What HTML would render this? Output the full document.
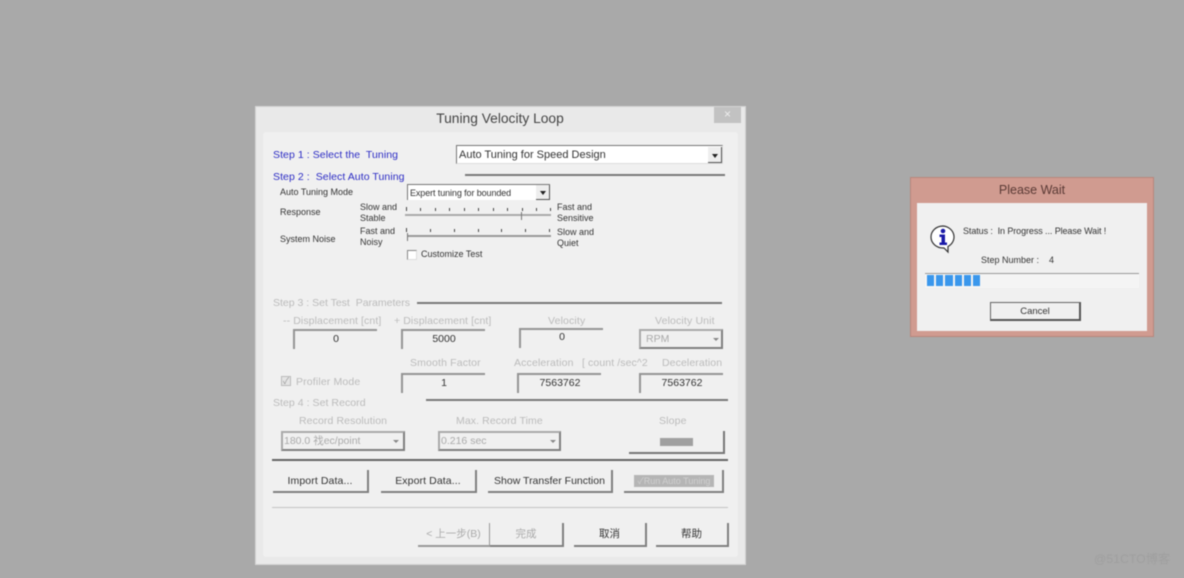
<!DOCTYPE html>
<html><head><meta charset="utf-8">
<style>
html,body{margin:0;padding:0;width:1184px;height:578px;overflow:hidden;background:#a9a9a9}
body{position:relative;font-family:"Liberation Sans","Noto Sans CJK SC",sans-serif;color:#333}
div{position:absolute;box-sizing:border-box;white-space:nowrap}
#w{left:0;top:0;width:1184px;height:578px;filter:blur(.4px)}
.t{font-size:9px;line-height:11px;color:#333;letter-spacing:0}
.d{font-size:10.5px;line-height:12px;color:#bbb;letter-spacing:.15px}
.b{font-size:10.5px;line-height:14px;color:#2b2bc4;letter-spacing:.07px}
.l{background:#7a7a7a;height:2px}
.in{border-top:2px solid #949494;border-left:2px solid #949494;font-size:10.5px;color:#333;text-align:center;line-height:24px}
.dd{border:2px solid #aaa;border-right-color:#808080;border-bottom-color:#808080;background:#f0f0f0;font-size:10.5px;color:#aaa;padding-left:1px}
.ar{width:0;height:0;border-left:3px solid transparent;border-right:3px solid transparent;border-top:3px solid #888}
.btn{border-right:2px solid #808080;border-bottom:2px solid #808080;font-size:10.5px;color:#333;text-align:center;letter-spacing:0;background:#f0f0f0}
.tk{width:1px;height:4px;background:#444}
</style></head><body>
<div id="w">

<!-- main dialog -->
<div style="left:255px;top:106px;width:491px;height:459px;background:#e9e9e9;border:1px solid #d4d4d4"></div>
<div style="left:263px;top:132px;width:475px;height:425px;background:#f0f0f0;border-radius:3px"></div>
<div style="left:255px;top:110px;width:490px;text-align:center;font-size:13.8px;line-height:18px;color:#444">Tuning Velocity Loop</div>
<div style="left:714px;top:107px;width:27px;height:16px;background:#c2c2c2;color:#eee;font-size:12px;line-height:15px;text-align:center">×</div>

<div class="b" style="left:273px;top:148px">Step 1 : Select the&nbsp; Tuning</div>
<div class="b" style="left:273px;top:170px">Step 2 :&nbsp; Select Auto Tuning</div>
<div style="left:456px;top:145px;width:267px;height:19px;background:#fff;border:1px solid #777;border-right-color:#ddd;border-bottom-color:#ddd;font-size:11px;line-height:18px;padding-left:2px;color:#333">Auto Tuning for Speed Design</div>
<div style="left:708px;top:147px;width:14px;height:16px;background:#eee;border-right:1px solid #555;border-bottom:1px solid #555"></div>
<div class="ar" style="left:712px;top:154px;border-top-color:#222;border-top-width:4px"></div>
<div class="l" style="left:465px;top:174px;width:260px"></div>

<div class="t" style="left:280px;top:187px">Auto Tuning Mode</div>
<div style="left:407px;top:184px;width:143px;height:16px;background:#fff;border-left:1px solid #777;border-top:1px solid #777;font-size:9px;line-height:16px;padding-left:2px;color:#333;letter-spacing:-.1px">Expert tuning for bounded</div>
<div style="left:536px;top:185px;width:14px;height:15px;background:#eee;border-right:1px solid #555;border-bottom:1px solid #555"></div>
<div class="ar" style="left:540px;top:191px;border-top-color:#222;border-top-width:4px"></div>

<div class="t" style="left:280px;top:207px">Response</div>
<div class="t" style="left:360px;top:202px">Slow and<br>Stable</div>
<div class="t" style="left:557px;top:202px">Fast and<br>Sensitive</div>
<div style="left:405px;top:214px;width:146px;height:2px;background:#aaa"></div>
<div style="left:521px;top:212px;width:1px;height:8px;background:#777"></div>
<div class="tk" style="left:406px;top:207px"></div><div class="tk" style="left:420px;top:208px;height:3px"></div><div class="tk" style="left:435px;top:208px;height:3px"></div><div class="tk" style="left:449px;top:208px;height:3px"></div><div class="tk" style="left:464px;top:208px;height:3px"></div><div class="tk" style="left:478px;top:208px;height:3px"></div><div class="tk" style="left:493px;top:208px;height:3px"></div><div class="tk" style="left:507px;top:208px;height:3px"></div><div class="tk" style="left:522px;top:208px;height:3px"></div><div class="tk" style="left:536px;top:208px;height:3px"></div><div class="tk" style="left:550px;top:208px;height:3px"></div>

<div class="t" style="left:280px;top:234px">System Noise</div>
<div class="t" style="left:360px;top:226px">Fast and<br>Noisy</div>
<div class="t" style="left:557px;top:227px">Slow and<br>Quiet</div>
<div style="left:407px;top:235px;width:144px;height:2px;background:#999"></div>
<div style="left:407px;top:233px;width:1px;height:8px;background:#777"></div>
<div class="tk" style="left:406px;top:228px"></div><div class="tk" style="left:430px;top:229px;height:3px"></div><div class="tk" style="left:454px;top:229px;height:3px"></div><div class="tk" style="left:478px;top:229px;height:3px"></div><div class="tk" style="left:501px;top:229px;height:3px"></div><div class="tk" style="left:525px;top:229px;height:3px"></div><div class="tk" style="left:549px;top:229px;height:3px"></div>

<div style="left:407px;top:250px;width:10px;height:10px;background:#fff;border:1px solid #888;border-right-color:#ddd;border-bottom-color:#ddd"></div>
<div class="t" style="left:421px;top:249px">Customize Test</div>

<!-- step 3 -->
<div class="d" style="left:273px;top:297px;letter-spacing:0">Step 3 : Set Test&nbsp; Parameters</div>
<div class="l" style="left:417px;top:302px;width:305px"></div>
<div class="d" style="left:283px;top:315px;letter-spacing:.1px">-- Displacement [cnt]</div>
<div class="d" style="left:394px;top:315px;letter-spacing:.1px">+ Displacement [cnt]</div>
<div class="d" style="left:548px;top:315px">Velocity</div>
<div class="d" style="left:655px;top:315px">Velocity Unit</div>
<div class="in" style="left:293px;top:329px;width:84px;height:20px;line-height:17px">0</div>
<div class="in" style="left:401px;top:329px;width:84px;height:20px;line-height:17px">5000</div>
<div class="in" style="left:519px;top:328px;width:84px;height:20px;line-height:15px">0</div>
<div class="dd" style="left:639px;top:329px;width:84px;height:20px;line-height:17px;padding-left:5px">RPM</div>
<div class="ar" style="left:713px;top:338px"></div>

<div class="d" style="left:410px;top:357px">Smooth Factor</div>
<div class="d" style="left:514px;top:357px">Acceleration</div>
<div class="d" style="left:582px;top:357px;letter-spacing:.1px">[ count /sec^2</div>
<div class="d" style="left:662px;top:357px;letter-spacing:.1px">Deceleration</div>
<div style="left:281px;top:376px;width:10px;height:10px;background:#e4e4e4;border:1px solid #bbb;color:#999;font-size:9px;line-height:8px;text-align:center">✓</div>
<div class="d" style="left:296px;top:376px">Profiler Mode</div>
<div class="in" style="left:401px;top:373px;width:84px;height:20px;line-height:16px">1</div>
<div class="in" style="left:517px;top:373px;width:84px;height:20px;line-height:16px">7563762</div>
<div class="in" style="left:639px;top:373px;width:84px;height:20px;line-height:16px">7563762</div>

<!-- step 4 -->
<div class="d" style="left:273px;top:397px;letter-spacing:.05px">Step 4 : Set Record</div>
<div class="l" style="left:426px;top:399px;width:302px"></div>
<div class="d" style="left:299px;top:415px;letter-spacing:.1px">Record Resolution</div>
<div class="d" style="left:456px;top:415px;letter-spacing:.1px">Max. Record Time</div>
<div class="d" style="left:659px;top:415px">Slope</div>
<div class="dd" style="left:281px;top:431px;width:124px;height:20px;line-height:16px">180.0 䄀ec/point</div>
<div class="ar" style="left:393px;top:440px"></div>
<div class="dd" style="left:438px;top:431px;width:123px;height:20px;line-height:16px">0.216 sec</div>
<div class="ar" style="left:550px;top:440px"></div>
<div style="left:660px;top:438px;width:33px;height:8px;background:#a0a0a0"></div>
<div style="left:629px;top:431px;width:96px;height:23px;border-right:2px solid #777;border-bottom:2px solid #777"></div>

<div style="left:272px;top:459px;width:456px;height:2px;background:#666"></div>

<div class="btn" style="left:273px;top:470px;width:96px;height:23px;line-height:22px;letter-spacing:.1px">Import Data...</div>
<div class="btn" style="left:381px;top:470px;width:96px;height:23px;line-height:22px;letter-spacing:.1px">Export Data...</div>
<div class="btn" style="left:488px;top:470px;width:125px;height:23px;line-height:22px">Show Transfer Function</div>
<div class="btn" style="left:624px;top:470px;width:100px;height:23px"></div>
<div style="left:634px;top:475px;width:80px;height:12px;background:#b5b5b5;color:#d0d0d0;font-size:9px;line-height:12px;text-align:center">✓Run Auto Tuning</div>

<div style="left:272px;top:507px;width:456px;height:1px;background:#c4c4c4"></div>

<div class="btn" style="left:418px;top:523px;width:73px;height:24px;line-height:23px;color:#aaa;border-color:#999">&lt; 上一步(B)</div>
<div class="btn" style="left:490px;top:523px;width:74px;height:24px;line-height:23px;color:#aaa">完成</div>
<div class="btn" style="left:574px;top:523px;width:73px;height:24px;line-height:23px">取消</div>
<div class="btn" style="left:656px;top:523px;width:73px;height:24px;line-height:23px">帮助</div>

<!-- please wait dialog -->
<div style="left:910px;top:177px;width:244px;height:160px;background:#d09b90;border:1px solid #b8867c"></div>
<div style="left:910px;top:182px;width:244px;text-align:center;font-size:12.5px;line-height:16px;color:#5a3a35">Please Wait</div>
<div style="left:917px;top:203px;width:230px;height:128px;background:#f0f0f0"></div>
<svg style="position:absolute;left:929px;top:224px" width="30" height="30" viewBox="0 0 30 30">
<path d="M14 2a12 11 0 1 0 0 22l1 0 4 4 0-5.500a12 11 0 0 0-5-20.500z" fill="#fff" stroke="#333" stroke-width="1.200"/>
<circle cx="14" cy="7" r="2.300" fill="#1a1aa8"/>
<path d="M10.500 10.500h5.500v8h2v2.500h-7.500v-2.500h2v-5.500h-2z" fill="#1a1aa8"/>
</svg>
<div class="t" style="left:963px;top:226px;letter-spacing:-.09px">Status :&nbsp; In Progress ... Please Wait !</div>
<div class="t" style="left:981px;top:255px">Step Number :&nbsp;&nbsp;&nbsp; 4</div>
<div style="left:925px;top:273px;width:214px;height:1px;background:#999"></div>
<div style="left:925px;top:274px;width:214px;height:14px;background:#f4f4f4"></div>
<div style="left:927px;top:275px;width:7px;height:11px;background:#3a97ec"></div>
<div style="left:936px;top:275px;width:7px;height:11px;background:#3a97ec"></div>
<div style="left:945px;top:275px;width:8px;height:11px;background:#3a97ec"></div>
<div style="left:955px;top:275px;width:7px;height:11px;background:#3a97ec"></div>
<div style="left:964px;top:275px;width:7px;height:11px;background:#3a97ec"></div>
<div style="left:973px;top:275px;width:7px;height:11px;background:#3a97ec"></div>
<div style="left:990px;top:302px;width:91px;height:19px;background:#f0f0f0;border:1px solid #666;border-right:2px solid #555;border-bottom:2px solid #555;font-size:9.5px;line-height:18px;text-align:center;color:#333">Cancel</div>

<!-- watermark -->
<div style="left:1094px;top:552px;font-size:12px;line-height:15px;color:#9f9f9f;letter-spacing:.2px">@51CTO博客</div>
</div>
</body></html>
